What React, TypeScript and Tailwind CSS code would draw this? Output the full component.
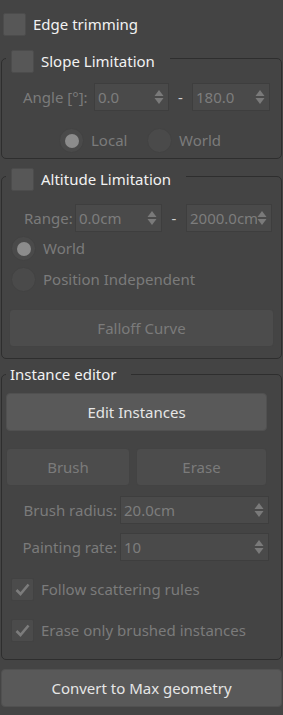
import React from "react";

const FONT = { fontFamily: '"Noto Sans", "Open Sans", sans-serif' };

function Check({ checked = false, disabled = false }: { checked?: boolean; disabled?: boolean }) {
  return (
    <span
      className={`flex items-center justify-center w-[23px] h-[23px] rounded-[2px] border shrink-0 ${
        disabled ? "bg-[#4b4b4b] border-[#424242]" : "bg-[#575757] border-[#4c4c4c]"
      }`}
    >
      {checked && (
        <svg width="15" height="13" viewBox="0 0 15 13">
          <path d="M1.5 7 L5.5 11 L13.5 1.5" fill="none" stroke={disabled ? "#7c7c7c" : "#e0e0e0"} strokeWidth="2.6" />
        </svg>
      )}
    </span>
  );
}

function Radio({ on = false }: { on?: boolean }) {
  return (
    <span className="flex items-center justify-center w-[25px] h-[25px] rounded-full bg-[#4a4a4a] border border-[#424242] shrink-0">
      {on && <span className="w-[14px] h-[14px] rounded-full bg-[#8c8c8c]" />}
    </span>
  );
}

function Arrows() {
  return (
    <svg width="10" height="16" viewBox="0 0 10 16" className="shrink-0">
      <path d="M5 1 L9.5 7 L0.5 7 Z" fill="#7a7a7a" />
      <path d="M5 15 L9.5 9 L0.5 9 Z" fill="#7a7a7a" />
    </svg>
  );
}

function Spinner({ value, w }: { value: string; w: string }) {
  return (
    <div className={`flex items-center h-[28px] ${w} bg-[#4a4a4a] border border-[#3e3e3e] pl-[3px] pr-[4px]`}>
      <span className="flex-1 min-w-0 overflow-hidden whitespace-nowrap leading-[22px] text-[#7d7d7d]">{value}</span>
      <Arrows />
    </div>
  );
}

function Button({ label, active = false, className = "" }: { label: string; active?: boolean; className?: string }) {
  return (
    <div
      className={`flex items-center justify-center h-[38px] rounded-[4px] border ${
        active ? "bg-[#595959] border-[#505050] text-[#e6e6e6]" : "bg-[#4c4c4c] border-[#434343] text-[#7b7b7b]"
      } ${className}`}
    >
      {label}
    </div>
  );
}

function Group({
  children,
  header,
  className = "",
  headerClass = "-mt-[9px]",
}: {
  children: React.ReactNode;
  header: React.ReactNode;
  className?: string;
  headerClass?: string;
}) {
  return (
    <div className={`mx-[1px] border border-[#2e2e2e] rounded-[5px] ${className}`}>
      <div className={`flex h-[23px] ml-[4px] ${headerClass}`}>
        <div className="flex items-center gap-[7px] bg-[#444444] pl-[5px] pr-[15px]">{header}</div>
      </div>
      {children}
    </div>
  );
}

export default function App() {
  return (
    <div style={FONT} className="w-[283px] h-[715px] bg-[#444444] text-[15px] leading-none overflow-hidden">
      <div className="flex items-center gap-[7px] pt-[13px] pl-[3px]">
        <Check />
        <span className="text-[#f2f2f2]">Edge trimming</span>
      </div>

      <Group
        className="mt-[22px] h-[101px]"
        header={
          <>
            <Check />
            <span className="text-[#f2f2f2]">Slope Limitation</span>
          </>
        }
      >
        <div className="flex items-center mt-[10px] pl-[21px]">
          <span className="text-[#7b7b7b] w-[71px] whitespace-nowrap">Angle [°]:</span>
          <Spinner value="0.0" w="w-[75px]" />
          <span className="w-[23px] text-center text-[#d0d0d0]">-</span>
          <Spinner value="180.0" w="w-[78px]" />
        </div>
        <div className="flex items-center mt-[17px] pl-[57px] text-[#7b7b7b]">
          <Radio on />
          <span className="ml-[7px] w-[56px]">Local</span>
          <Radio />
          <span className="ml-[7px]">World</span>
        </div>
      </Group>

      <Group
        className="mt-[17px] h-[183px]"
        header={
          <>
            <Check />
            <span className="text-[#f2f2f2]">Altitude Limitation</span>
          </>
        }
      >
        <div className="flex items-center mt-[13px] pl-[22px]">
          <span className="text-[#7b7b7b] w-[51px]">Range:</span>
          <Spinner value="0.0cm" w="w-[87px]" />
          <span className="w-[24px] text-center text-[#d0d0d0]">-</span>
          <Spinner value="2000.0cm" w="w-[86px]" />
        </div>
        <div className="flex items-center mt-[4px] pl-[9px] text-[#7b7b7b]">
          <Radio on />
          <span className="ml-[7px]">World</span>
        </div>
        <div className="flex items-center mt-[6px] pl-[9px] text-[#7b7b7b]">
          <Radio />
          <span className="ml-[7px]">Position Independent</span>
        </div>
        <Button label="Falloff Curve" className="mt-[17px] mx-[7px]" />
      </Group>

      <Group
        className="mt-[15px] h-[286px]"
        headerClass="-mt-[12px]"
        header={<span className="text-[#f2f2f2] -ml-[1px]">Instance editor</span>}
      >
        <Button label="Edit Instances" active className="mt-[7px] ml-[4px] mr-[14px]" />
        <div className="flex gap-[6px] mt-[17px] ml-[4px] mr-[14px]">
          <Button label="Brush" className="w-[124px]" />
          <Button label="Erase" className="flex-1" />
        </div>
        <div className="flex items-center mt-[10px]">
          <span className="w-[118px] pr-[3px] text-right text-[#7b7b7b] whitespace-nowrap">Brush radius:</span>
          <Spinner value="20.0cm" w="w-[149px]" />
        </div>
        <div className="flex items-center mt-[9px]">
          <span className="w-[118px] pr-[3px] text-right text-[#7b7b7b] whitespace-nowrap">Painting rate:</span>
          <Spinner value="10" w="w-[149px]" />
        </div>
        <div className="flex items-center gap-[7px] mt-[17px] pl-[9px] text-[#7b7b7b]">
          <Check checked disabled />
          <span>Follow scattering rules</span>
        </div>
        <div className="flex items-center gap-[7px] mt-[18px] pl-[9px] text-[#7b7b7b]">
          <Check checked disabled />
          <span>Erase only brushed instances</span>
        </div>
      </Group>

      <Button label="Convert to Max geometry" active className="mt-[9px] mx-[1px]" />
    </div>
  );
}
